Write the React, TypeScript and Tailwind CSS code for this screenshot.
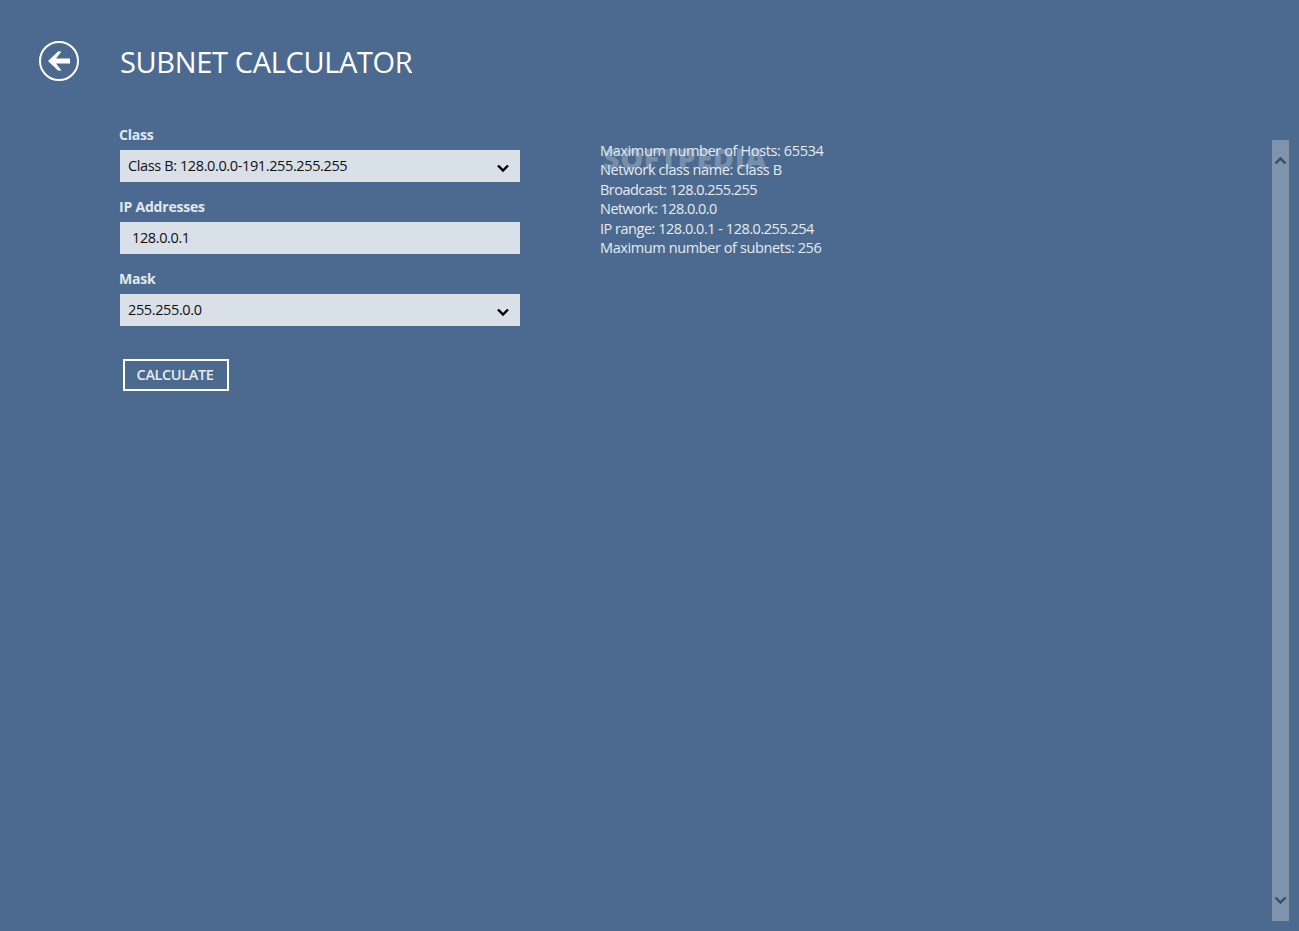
const results = [
  { text: "Maximum number of Hosts: 65534", spacing: "tracking-[-0.37px]" },
  { text: "Network class name: Class B", spacing: "tracking-[-0.37px]" },
  { text: "Broadcast: 128.0.255.255", spacing: "tracking-[-0.54px]" },
  { text: "Network: 128.0.0.0", spacing: "tracking-[-0.54px]" },
  { text: "IP range: 128.0.0.1 - 128.0.255.254", spacing: "tracking-[-0.48px]" },
  { text: "Maximum number of subnets: 256", spacing: "tracking-[-0.4px]" },
];

function Chevron() {
  return (
    <svg width="14" height="10" viewBox="0 0 14 10" className="mt-[3px] text-black">
      <path d="M2 2.5 7 7.5 12 2.5" fill="none" stroke="currentColor" strokeWidth="2.4" />
    </svg>
  );
}

function BackIcon() {
  return (
    <svg width="24" height="20" viewBox="0 0 24 20" className="text-white">
      <path d="M11 0.5 1 10 11 19.5 14.5 19.5 9 12.5 23 12.5 23 7.5 9 7.5 14.5 0.5Z" fill="currentColor" />
    </svg>
  );
}

function Field({ label, value, select }: { label: string; value: string; select?: boolean }) {
  return (
    <div className="flex flex-col">
      <label className="-ml-px h-[26px] pt-px text-[14px] leading-[20px] font-bold tracking-[-0.2px] text-[#e3e8ef]">
        {label}
      </label>
      <div className={`flex h-[32px] w-[400px] items-center justify-between bg-[#dae0e8] pr-[10px] text-[14.5px] tracking-[-0.38px] text-[#111] ${select ? "pl-[8px]" : "pl-[12px]"}`}>
        <span>{value}</span>
        {select && <Chevron />}
      </div>
    </div>
  );
}

export default function App() {
  return (
    <main className="relative flex h-[931px] w-full overflow-hidden bg-[#4c6a8f] font-['Open_Sans','Liberation_Sans',sans-serif] text-white">
      <div className="flex w-[120px] shrink-0 justify-start pl-[39px] pt-[41px]">
        <div className="flex h-[40px] w-[40px] items-center justify-center rounded-full border-[2px] border-white">
          <BackIcon />
        </div>
      </div>

      <div className="flex w-[480px] shrink-0 flex-col">
        <h1 className="mt-[42px] h-[40px] text-[29px] leading-[40px] tracking-[-0.35px] whitespace-nowrap">
          SUBNET CALCULATOR
        </h1>
        <div className="mt-[42px] flex flex-col gap-[14px]">
          <Field label="Class" value="Class B: 128.0.0.0-191.255.255.255" select />
          <Field label="IP Addresses" value="128.0.0.1" />
          <Field label="Mask" value="255.255.0.0" select />
        </div>
        <button className="mt-[33px] ml-[3px] h-[32px] w-[106px] border-[2px] border-white pr-[2px] text-[14.5px] font-semibold tracking-[-0.4px] text-[#e8ecf1]">
          CALCULATE
        </button>
      </div>

      <div className="relative flex-1 pt-[140.7px]">
        <div className="absolute left-[3px] top-[138px] text-[29px] leading-[40px] font-extrabold tracking-[0.5px] text-white/25">
          SOFTPEDIA
        </div>
        <ul className="relative">
          {results.map((r) => (
            <li key={r.text} className={`h-[19.5px] text-[14.5px] leading-[19.5px] whitespace-nowrap text-[#e6ebf1] ${r.spacing}`}>
              {r.text}
            </li>
          ))}
        </ul>
      </div>

      <div className="mt-[140px] mr-[10px] flex h-[781px] w-[17px] shrink-0 flex-col items-center justify-between bg-[#7f93ac] py-[16px] text-[#3a4c66]">
        <svg width="13" height="9" viewBox="0 0 13 9"><path d="M1.5 7.5 6.5 2.5 11.5 7.5" fill="none" stroke="currentColor" strokeWidth="2.4" /></svg>
        <svg width="13" height="9" viewBox="0 0 13 9"><path d="M1.5 1.5 6.5 6.5 11.5 1.5" fill="none" stroke="currentColor" strokeWidth="2.4" /></svg>
      </div>
    </main>
  );
}
